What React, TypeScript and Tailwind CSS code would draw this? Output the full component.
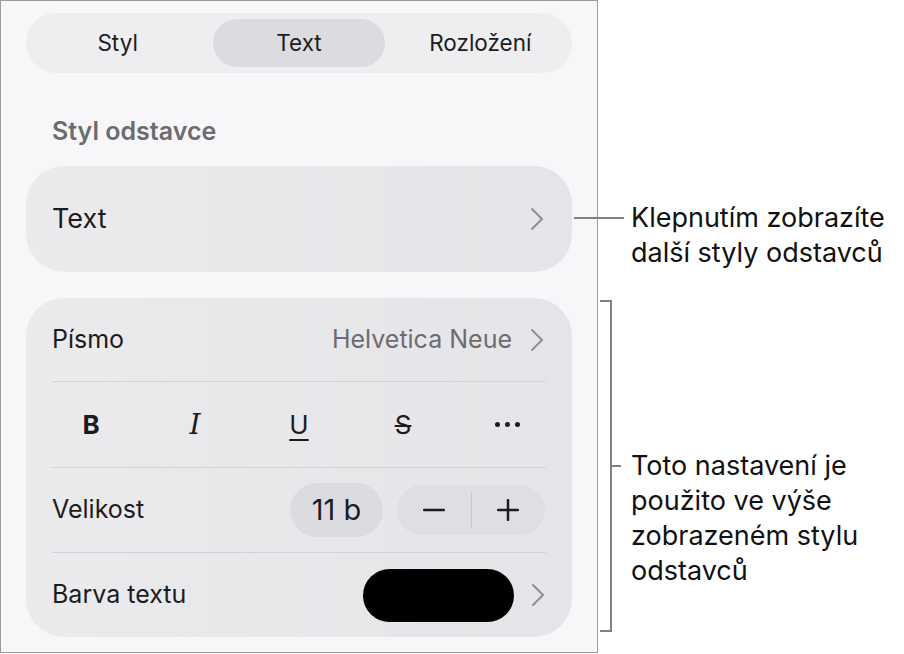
import React from "react";

const font = { fontFamily: "Inter, 'Noto Sans', sans-serif" };

const Chevron = () => (
  <svg width="14" height="24" viewBox="0 0 14 24" className="shrink-0">
    <path d="M2 2 L12 12 L2 22" fill="none" stroke="#8e8e93" strokeWidth="2" strokeLinecap="round" strokeLinejoin="round" />
  </svg>
);

const Divider = () => <div className="mx-[26px] h-px bg-[#d3d3d7]" />;

const tabs = ["Styl", "Text", "Rozložení"];

const FormatPanel = () => (
  <div className="w-[598px] h-[653px] shrink-0 border border-[#9c9c9c] bg-[#f7f7f9] px-[25px] pt-[12px] text-[#1c1c1e]">
    {/* tabs */}
    <div className="h-[60px] rounded-full bg-[#eeeef0] p-[6px] grid grid-cols-3 gap-[10px]">
      {tabs.map((t) => (
        <div
          key={t}
          className={
            "flex items-center justify-center rounded-full text-[22.5px] " +
            (t === "Text" ? "bg-[#dcdce0]" : "")
          }
        >
          {t}
        </div>
      ))}
    </div>

    <div className="mt-[45px] mb-[20px] pl-[26px] h-[28px] flex items-center text-[25px] font-semibold text-[#6c6c70]">
      Styl odstavce
    </div>

    {/* paragraph style */}
    <div className="h-[106px] rounded-[38px] bg-gradient-to-r from-[#ebebed] to-[#e5e5e9] flex items-center justify-between pl-[26px] pr-[28px]">
      <span className="text-[27px]">Text</span>
      <Chevron />
    </div>

    {/* font settings */}
    <div className="mt-[26px] h-[339px] rounded-[38px] bg-gradient-to-r from-[#ebebed] to-[#e5e5e9] flex flex-col">
      <div className="h-[83px] flex items-center justify-between pl-[26px] pr-[28px]">
        <span className="text-[25px]">Písmo</span>
        <div className="flex items-center gap-[18px]">
          <span className="text-[25px] text-[#6c6c70]">Helvetica Neue</span>
          <Chevron />
        </div>
      </div>
      <Divider />
      <div className="h-[85px] grid grid-cols-5 px-[13px] items-center text-[26px]">
        <div className="flex justify-center font-bold">B</div>
        <div className="flex justify-center italic text-[28px]" style={{ fontFamily: "'DejaVu Serif', serif" }}>
          <span className="font-light">I</span>
        </div>
        <div className="flex justify-center underline underline-offset-[5px] decoration-[2px]">U</div>
        <div className="flex justify-center line-through decoration-[2px]">S</div>
        <div className="flex justify-center gap-[5px]">
          <span className="w-[5px] h-[5px] rounded-full bg-[#1c1c1e]" />
          <span className="w-[5px] h-[5px] rounded-full bg-[#1c1c1e]" />
          <span className="w-[5px] h-[5px] rounded-full bg-[#1c1c1e]" />
        </div>
      </div>
      <Divider />
      <div className="h-[84px] flex items-center justify-between pl-[26px] pr-[27px]">
        <span className="text-[25px]">Velikost</span>
        <div className="flex items-center gap-[14px]">
          <div className="w-[93px] h-[54px] rounded-full bg-[#dcdce0] flex items-center justify-center text-[29px]">
            11 b
          </div>
          <div className="w-[148px] h-[50px] rounded-full bg-[#dfdfe3] flex items-center">
            <div className="flex-1 flex justify-center">
              <svg width="22" height="4" viewBox="0 0 22 4">
                <rect x="0" y="0.75" width="22" height="2.5" rx="1" fill="#1c1c1e" />
              </svg>
            </div>
            <div className="w-px h-[36px] bg-[#c7c7cc]" />
            <div className="flex-1 flex justify-center">
              <svg width="22" height="22" viewBox="0 0 22 22">
                <rect x="0" y="9.75" width="22" height="2.5" rx="1" fill="#1c1c1e" />
                <rect x="9.75" y="0" width="2.5" height="22" rx="1" fill="#1c1c1e" />
              </svg>
            </div>
          </div>
        </div>
      </div>
      <Divider />
      <div className="flex-1 flex items-center justify-between pl-[26px] pr-[27px]">
        <span className="text-[25px]">Barva textu</span>
        <div className="flex items-center gap-[17px]">
          <div className="w-[151px] h-[53px] rounded-full bg-black" />
          <Chevron />
        </div>
      </div>
    </div>
  </div>
);

export default function App() {
  return (
    <div className="relative w-[904px] h-[654px] bg-white flex" style={font}>
      <FormatPanel />

      <div className="flex-1 pl-[33px] pt-[200px] text-[27px] leading-[35px] text-[#111]">
        <p>
          Klepnutím zobrazíte
          <br />
          další styly odstavců
        </p>
        <p className="mt-[178px]">
          Toto nastavení je
          <br />
          použito ve výše
          <br />
          zobrazeném stylu
          <br />
          odstavců
        </p>
      </div>

      {/* callout lines */}
      <div className="absolute left-[574px] top-[217px] w-[50px] h-[2px] bg-[#808080]" />
      <div className="absolute left-[600px] top-[300px] w-[12px] h-[332px] border-y-2 border-r-2 border-[#808080]" />
      <div className="absolute left-[612px] top-[465px] w-[9px] h-[2px] bg-[#808080]" />
    </div>
  );
}
